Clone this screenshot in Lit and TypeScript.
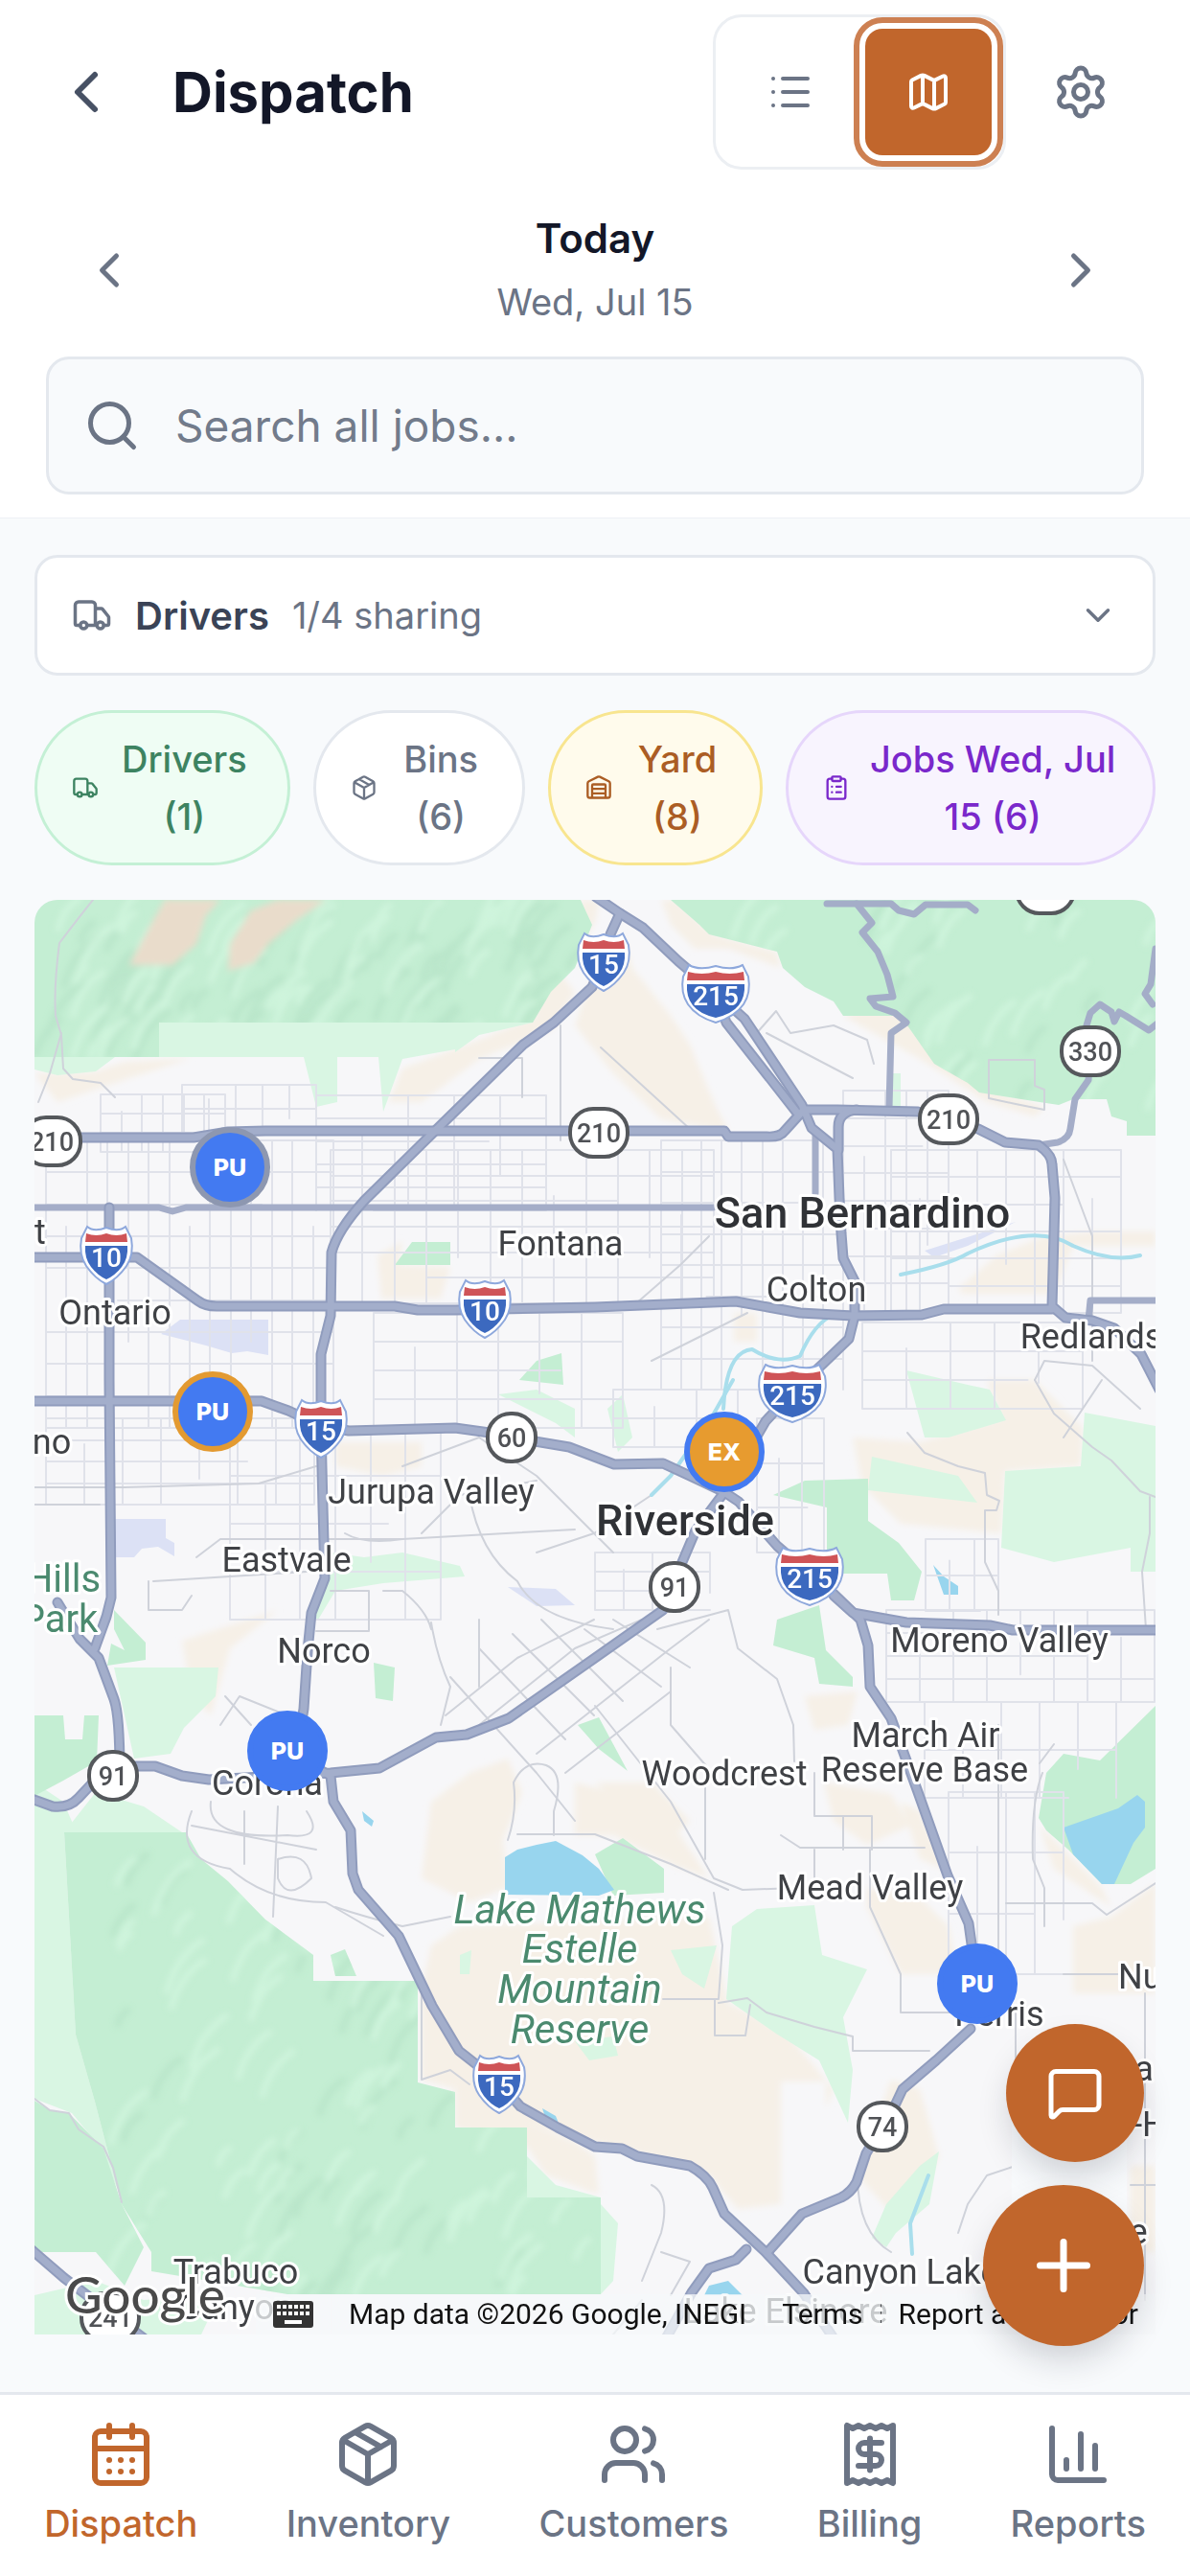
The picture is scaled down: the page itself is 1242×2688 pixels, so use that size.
import { LitElement, html, svg, css } from "lit";
import { customElement, property, state } from "lit/decorators.js";
import { classMap } from "lit/directives/class-map.js";
import { styleMap } from "lit/directives/style-map.js";

const ICONS: Record<string, unknown> = {
  left: svg`<path d="m15 18-6-6 6-6" />`,
  right: svg`<path d="m9 18 6-6-6-6" />`,
  down: svg`<path d="m6 9 6 6 6-6" />`,
  list: svg`<path d="M3 5h.01M3 12h.01M3 19h.01M8 5h13M8 12h13M8 19h13" />`,
  map: svg`<path d="M14.106 5.553a2 2 0 0 0 1.788 0l3.659-1.83A1 1 0 0 1 21 4.619v12.764a1 1 0 0 1-.553.894l-4.553 2.277a2 2 0 0 1-1.788 0l-4.212-2.106a2 2 0 0 0-1.788 0l-3.659 1.83A1 1 0 0 1 3 19.381V6.618a1 1 0 0 1 .553-.894l4.553-2.277a2 2 0 0 1 1.788 0zM15 5.764v15M9 3.236v15" />`,
  settings: svg`<path d="M9.671 4.136a2.34 2.34 0 0 1 4.659 0 2.34 2.34 0 0 0 3.319 1.915 2.34 2.34 0 0 1 2.33 4.033 2.34 2.34 0 0 0 0 3.831 2.34 2.34 0 0 1-2.33 4.033 2.34 2.34 0 0 0-3.319 1.915 2.34 2.34 0 0 1-4.659 0 2.34 2.34 0 0 0-3.32-1.915 2.34 2.34 0 0 1-2.33-4.033 2.34 2.34 0 0 0 0-3.831A2.34 2.34 0 0 1 6.35 6.051a2.34 2.34 0 0 0 3.319-1.915" /><circle cx="12" cy="12" r="3" />`,
  search: svg`<path d="m21 21-4.34-4.34" /><circle cx="11" cy="11" r="8" />`,
  truck: svg`<path d="M14 18V6a2 2 0 0 0-2-2H4a2 2 0 0 0-2 2v11a1 1 0 0 0 1 1h2M15 18H9M19 18h2a1 1 0 0 0 1-1v-3.65a1 1 0 0 0-.22-.624l-3.48-4.35A1 1 0 0 0 17.52 8H14" /><circle cx="17" cy="18" r="2" /><circle cx="7" cy="18" r="2" />`,
  package: svg`<path d="M11 21.73a2 2 0 0 0 2 0l7-4A2 2 0 0 0 21 16V8a2 2 0 0 0-1-1.73l-7-4a2 2 0 0 0-2 0l-7 4A2 2 0 0 0 3 8v8a2 2 0 0 0 1 1.73zM12 22V12M3.29 7 12 12l8.71-5M7.5 4.27l9 5.15" />`,
  warehouse: svg`<path d="M18 21V10a1 1 0 0 0-1-1H7a1 1 0 0 0-1 1v11M22 19a2 2 0 0 1-2 2H4a2 2 0 0 1-2-2V8a2 2 0 0 1 1.132-1.803l7.95-3.974a2 2 0 0 1 1.837 0l7.948 3.974A2 2 0 0 1 22 8zM6 13h12M6 17h12" />`,
  clipboard: svg`<rect x="8" y="2" width="8" height="4" rx="1" /><path d="M16 4h2a2 2 0 0 1 2 2v14a2 2 0 0 1-2 2H6a2 2 0 0 1-2-2V6a2 2 0 0 1 2-2h2M12 11h4M12 16h4M8 11h.01M8 16h.01" />`,
  calendar: svg`<path d="M8 2v4M16 2v4M3 10h18M8 14h.01M12 14h.01M16 14h.01M8 18h.01M12 18h.01M16 18h.01" /><rect x="3" y="4" width="18" height="18" rx="2" />`,
  users: svg`<path d="M16 21v-2a4 4 0 0 0-4-4H6a4 4 0 0 0-4 4v2M16 3.128a4 4 0 0 1 0 7.744M22 21v-2a4 4 0 0 0-3-3.87" /><circle cx="9" cy="7" r="4" />`,
  receipt: svg`<path d="M4 2v20l2-1 2 1 2-1 2 1 2-1 2 1 2-1 2 1V2l-2 1-2-1-2 1-2-1-2 1-2-1-2 1ZM16 8h-6a2 2 0 1 0 0 4h4a2 2 0 1 1 0 4H8M12 17.5v-11" />`,
  chart: svg`<path d="M3 3v16a2 2 0 0 0 2 2h16M18 17V9M13 17V5M8 17v-3" />`,
  message: svg`<path d="M22 17a2 2 0 0 1-2 2H6.828a2 2 0 0 0-1.414.586l-2.202 2.202A.71.71 0 0 1 2 21.286V5a2 2 0 0 1 2-2h16a2 2 0 0 1 2 2z" />`,
  plus: svg`<path d="M5 12h14M12 5v14" />`,
};

const icon = (name: string) => html`
  <svg class="icon" viewBox="0 0 24 24" aria-hidden="true">${ICONS[name]}</svg>
`;

// Map canvas origin and size, in map units
const MAP = { x: 36, y: 939, w: 1170, h: 1497 };

const HIGHWAYS = [
  // I-215
  "M622 936L647 953 671 968 708 1003 748 1037 777 1063 837 1153 847 1177 874 1199 876 1250 878 1287 880 1313 892 1337V1373L886 1397 859 1423 827 1453 799 1483 756 1557 771 1567 811 1613 846 1643 870 1663 898 1690 906 1717 908 1760 930 1793 958 1870 989 1957 1011 2007 1017 2050",
  "M752 1050L758 1067 831 1160",
  // I-15
  "M647 953L637 975 630 1003 618 1030 578 1067 546 1090 451 1183 380 1253Q352 1284 346 1307L345 1373 335 1413 335 1490 337 1573 339 1647 325 1683 321 1723 317 1783 309 1833 345 1853 348 1880 366 1910 368 1955 374 1972 416 2020 451 2093 479 2140 521 2173 543 2198 582 2220 621 2240 649 2242 665 2250 720 2260Q738 2270 744 2283L756 2310 799 2350 839 2393 870 2440",
  // 210
  "M30 1187H202L238 1181 277 1180H756L760 1186H800Q814 1187 819 1180L839 1158H874L958 1160 990 1168 1021 1178 1049 1192 1084 1195Q1098 1205 1098 1215L1101 1250 1098 1363 1112 1375 1140 1378 1163 1386 1191 1413 1210 1450",
  "M894 1158Q875 1160 875 1176V1200",
  // I-10
  "M30 1312H143L206 1357Q214 1363 226 1363H412L436 1367H475L621 1364 768 1358 835 1370 890 1373 962 1372 985 1366H1098",
  // 60
  "M30 1462H273L301 1472 335 1488 364 1493 475 1490 511 1495 534 1500 594 1510 641 1528 692 1527 720 1540 756 1557",
  "M870 1665L890 1683 946 1693 1033 1696 1057 1701H1210",
  // 91
  "M30 1876L55 1885Q72 1887 82 1876L97 1860 119 1848 143 1843H162L190 1853 218 1857 345 1850 396 1845 455 1813 487 1810 531 1793 621 1730 692 1680 712 1630 726 1597 756 1557",
  "M114 1260V1440L116 1667 111 1687 99 1720M60 1672L83 1710 103 1730 119 1773Q125 1790 125 1850",
  // 74
  "M1013 2117L977 2150 942 2180 934 2197 904 2247 894 2277Q888 2288 878 2293L837 2310 803 2348M779 2347L768 2358 740 2367 722 2392 695 2440",
  "M30 2345L67 2377 150 2440",
];

const ROUTES = [
  "M30 1260H166L180 1264 194 1260H744",
  "M863 943H894L910 963 900 973 916 993 926 1017 932 1040 908 1042 914 1050 934 1057 946 1067 930 1078 928 1156",
  "M894 943H930L938 950 954 954 966 944H1010L1018 950",
  "M1084 1195L1104 1192Q1116 1188 1117 1178L1122 1147 1136 1127 1138 1097 1134 1070 1138 1057 1148 1048 1160 1056 1163 1066 1168 1056 1175 1060 1199 1075 1208 1068",
  "M1206 990L1201 1027 1195 1037 1203 1048",
  "M851 1180V1245",
  "M1136 1377L1138 1357H1206",
];

const ROADS = [
  "M97 939Q84 955 62 984 56 1030 58 1060L64 1080 66 1115 76 1126 105 1130 120 1145M64 1078L52 1120 40 1150",
  "M36 2190L52 2202 72 2205 82 2222 108 2240 118 2262 127 2298",
  "M947 1495L965 1516 1000 1530 1028 1537 1030 1560 1043 1566 1040 1576 1028 1576V1630L1042 1660V1685",
  "M1080 1440L1100 1475 1140 1510 1160 1524 1190 1556 1206 1562M1200 1562V1600L1192 1640 1196 1700",
  "M205 1625L230 1606 420 1606 600 1596M36 1552H130L270 1548 330 1530M36 1570H104",
  "M686 1700L760 1680 770 1720 811 1752 828 1800 829 1838M700 1740V1800L740 1846M736 1846V1940",
  "M621 1780L700 1880 745 1960 775 1972 830 1970M745 1975L754 2030 750 2086H692M750 2090L780 2085 800 2100 850 2115 890 2125V2140H970M746 2086V2124H778L783 2092",
  "M815 1915L835 1928H965M880 1895V1930M850 1930V1960M908 1930V1990L940 2060V2100H1000",
  "M850 1850V1895H910V1930M1042 1800V2100M1088 1850Q1076 1880 1078 1940L1090 1970V2010M1100 1820L1085 1840M1050 1986H1140L1155 1998 1206 1965",
  "M530 1920Q540 1890 536 1860 548 1835 570 1842 590 1850 578 1890V1915M540 1914H621L700 1945 760 1972",
  "M450 1693Q456 1730 470 1760L460 1800M400 1660H420Q445 1680 450 1700M500 1690V1760",
  "M360 1600Q380 1612 420 1606M345 1660H385V1702H330M160 1650 320 1640M155 1650V1680H190L200 1665",
  "M235 1770L262 1800M230 1800L250 1770 300 1790M200 1890Q180 1940 240 1950 280 1985 340 1985L400 2020M220 1880Q215 1920 300 1915 340 1920 320 1890M255 1890V1945M290 1885 285 2000M200 1905 330 1930",
  "M290 1940Q320 1930 325 1960 300 1985 290 1960ZM350 1990Q380 2000 420 2010L470 2000M440 2060V2170L470 2160 490 2175",
  "M1060 2100V2260L1030 2270 1010 2300 1000 2330M1110 2060H1170M1195 2080V2400M1180 2280H1206",
  "M895 2270Q895 2330 930 2350M680 2280Q700 2290 690 2330L670 2380M690 2350 720 2360 700 2395M670 2400 640 2436",
  "M627 1093L720 1178M585 1070V1190M500 1104H545V1145M788 1080L810 1055 825 1078 870 1070 905 1085 912 1110M800 1078 890 1125",
  "M1032 1106H1080V1133L1090 1137V1158L1060 1152 1032 1146ZM1110 1210 1125 1250 1140 1290V1420",
  "M664 1360 710 1320 740 1290M680 1420 780 1370M1080 1440 1090 1420 1140 1425 1190 1470M1150 1440 1110 1500",
  // Arlington diagonals
  "M470 1750L560 1850 600 1900M500 1720L590 1815M535 1705L620 1790M565 1690L650 1775M610 1700L690 1760M640 1690L720 1740",
  "M465 1790L540 1730 620 1690M500 1800L600 1720 670 1690M560 1830L700 1720 740 1690M590 1850L700 1765",
  "M420 1530L500 1500 560 1540 640 1620M440 1600L480 1560 560 1545M490 1560Q500 1620 540 1650 560 1690 640 1700M560 1620 620 1600 680 1560",
];

// x, y, width, height, columns, rows
const GRIDS = [
  [105, 1142, 130, 60, 6, 3],
  [190, 1132, 140, 50, 5, 2],
  [330, 1143, 240, 120, 5, 5],
  [48, 1190, 300, 300, 14, 9],
  [345, 1200, 400, 160, 12, 6],
  [390, 1370, 260, 120, 6, 4],
  [48, 1480, 280, 90, 7, 4],
  [240, 1490, 220, 200, 6, 4],
  [690, 1190, 190, 260, 9, 8],
  [640, 1450, 130, 60, 3, 2],
  [880, 1138, 110, 230, 5, 8],
  [930, 1200, 240, 170, 8, 6],
  [900, 1380, 230, 90, 5, 3],
  [925, 1680, 280, 96, 8, 4],
  [965, 1776, 200, 100, 5, 2],
  [990, 1870, 120, 190, 4, 3],
  [621, 1620, 120, 60, 4, 3],
  [790, 1480, 70, 140, 3, 3],
  [966, 1606, 76, 75, 3, 2],
];

const WOODS = [
  "M36 939H606L618 965 600 1010 575 1035 556 1067H166V1103H36Z",
  "M700 939L730 965 740 975 811 993 817 1010 840 1030 870 1045 880 1060 940 1060 975 1110 1010 1130 1022 1140 1085 1150 1105 1153 1120 1147H1155L1160 1165 1176 1170V1185H1206V939Z",
  "M67 1912H194L210 1940 238 1963 277 2003 327 2040V2067H436V2173L475 2183V2220H550V2293H627V2394L300 2394 158 2370 158 2350 127 2300 99 2193 79 2123Z",
  "M36 2192L52 2202 72 2205 108 2242 127 2300 150 2345 130 2385 100 2350H36Z",
  "M36 1790H66L68 1815H86L88 1790H103L101 1838 66 1858 36 1874Z",
  "M119 1680L152 1714V1732L112 1738 116 1715 130 1722 119 1700Z",
  "M807 1560L840 1545 906 1543V1587L938 1610 962 1640 954 1670H930L926 1642H863V1573Z",
  "M811 1690L855 1675 862 1722 890 1750V1760L855 1757 850 1730 807 1717Z",
  "M1206 1780L1148 1837 1110 1830 1092 1850 1084 1897 1092 1910 1115 1930 1150 1966 1180 1966 1206 1950Z",
  "M621 1935L650 1918 693 1950V1975L640 1978Z",
  "M603 1800L625 1792 640 1820 655 1848 625 1825Z",
  "M412 1320L430 1296H470V1320Z",
  "M542 1440L560 1420 586 1412 588 1445Z",
  "M390 1735L412 1740 410 1775 392 1772Z",
  "M345 2040L360 2034 372 2062H350Z",
];

const MEADOWS = [
  "M166 1067H475V1095L420 1105 400 1160 395 1103H352V1150L330 1155 317 1103H166Z",
  "M475 1067H556L500 1080 475 1098ZM36 1103H120L100 1118 60 1122 36 1116Z",
  "M36 1860L66 1880 80 1912H67L79 2123 99 2193 127 2300 158 2350 130 2300 100 2235 75 2205 36 2190Z",
  "M100 1870L150 1885 190 1912H67Z",
  "M119 1740H228L225 1770 192 1803 178 1830 140 1835Z",
  "M320 1690L345 1620 380 1625 420 1620 480 1634 485 1645 400 1652 350 1660 332 1690Z",
  "M520 1455L560 1450 600 1470 600 1500 580 1485Z",
  "M946 1430L1010 1445 1033 1450 1050 1482 990 1500 965 1500Z",
  "M1049 1535L1128 1530 1132 1474 1206 1488V1640H1180V1615L1100 1630 1045 1615Z",
  "M910 1520L1000 1540 1020 1568 950 1560 906 1555Z",
  "M764 2010L790 1992 850 1988 858 2040 905 2055 880 2105 890 2160 885 2215 855 2150 810 2122 758 2086Z",
  "M960 2260L980 2245 970 2300 935 2330 925 2345 910 2335 925 2300Z",
  "M700 2035L748 2030 735 2075 712 2060Z",
  "M550 2250L580 2280 627 2293H550ZM627 2300L645 2320 640 2380 627 2394Z",
  "M36 2395L100 2380 150 2400 230 2394 210 2436H36Z",
  "M634 1470L650 1455 660 1500 645 1515Z",
  "M930 1120H940V1155H930Z",
  "M600 2130L640 2125 645 2145 615 2150Z",
  "M480 2040L492 2035 490 2060H480Z",
];

const SANDS = [
  "M625 1000L650 975 660 1010 700 1060 720 1090 745 1150 760 1180 690 1168 640 1120 600 1070Z",
  "M606 939H625L622 960 600 1000ZM545 985L560 985 600 1035 575 1075 500 1105 440 1150 405 1150 420 1115 500 1085 560 1060Z",
  "M690 939H705L745 975 811 993 815 1010 760 990 725 990 700 965Z",
  "M880 1060L935 1045 960 1025 985 1025 985 1060 1000 1110 1030 1135 1090 1155 1080 1165 1030 1150 960 1105Z",
  "M1000 1345L1040 1310 1090 1290 1140 1285 1206 1285V1300L1120 1300 1100 1350H1005ZM766 1370H790V1400H766Z",
  "M394 1310L420 1295 416 1320 470 1322 460 1355H398ZM350 1505H440V1530L400 1540 350 1530Z",
  "M450 1880L490 1850 530 1835 545 1870 525 1920 530 1970 490 1985 440 1960Z",
  "M440 2075L450 2030 480 2010 740 2000 760 2090 820 2120 870 2180 862 2200V2172H815V2300L770 2305 740 2270 700 2255 600 2230 550 2215 475 2215V2180L440 2170Z",
  "M600 1860L640 1870 700 1900 740 1960 700 1945 640 1915 600 1915Z",
  "M621 1860L680 1860 720 1900 700 1920ZM940 1880 960 1890 985 1950 960 1940Z",
  "M860 1860L930 1872 950 1905 905 1925 870 1900ZM905 1970 960 1980 990 2010 1000 2060 940 2060 905 1990Z",
  "M1030 1440H1080L1130 1490 1128 1530 1049 1535 1045 1600 940 1590 900 1550 890 1500 960 1505 1045 1480Z",
  "M840 1770L895 1765 885 1800 850 1805Z",
  "M1120 2010L1160 2000 1206 1965V2080H1120ZM1085 1905 1115 1935 1150 1970 1160 1990 1100 1950ZM1180 2260H1206V2350H1180Z",
  "M895 2270L930 2170 960 2180 980 2250 940 2320Z",
  "M475 2215H550L600 2235 621 2250 625 2290 570 2270 550 2240 475 2220Z",
  "M190 1712L290 1680 240 1720 220 1790 200 1770Z",
  "M36 1120L100 1118 130 1108 200 1104 120 1130 60 1150Z",
];

const TANS = [
  "M135 1007L160 960 172 939H230L215 955 205 985 180 1007Z",
  "M238 1013L240 985 262 950 290 939H340L310 960 280 985 265 1005Z",
];

const WATER = [
  "M527 1977V1938L540 1930 560 1925 580 1921 608 1936 625 1950 641 1972 625 1978Z",
  "M1110 1907L1167 1887 1187 1873 1195 1880 1195 1907 1183 1923 1163 1966H1150L1120 1935Z",
  "M974 1633L985 1645 1000 1655V1664H985ZM740 2385L760 2380 775 2395H735Z",
  "M566 2200L580 2208 584 2218 570 2212ZM378 1890L390 1900 388 1906 380 1900Z",
];

const CIVIC = [
  "M168 1392L188 1377H280V1414L258 1410 242 1412 215 1404Z",
  "M120 1585H173V1605L182 1610V1624L165 1614 148 1616 140 1625H120Z",
  "M530 1656L580 1658 600 1675 560 1676Z",
  "M965 1305L1060 1275 1010 1300 975 1312Z",
];

const RIVERS = [
  "M755 1470Q758 1410 785 1408 812 1425 835 1415 850 1380 870 1372M940 1330Q990 1320 1010 1308 1080 1275 1120 1300 1160 1318 1190 1310",
  "M765 1440 745 1475 700 1540 680 1560M969 2270 950 2320 952 2352",
];

const TOWNS = [
  { t: "San Bernardino", x: 900, y: 1281, cls: "city" },
  { t: "Riverside", x: 715, y: 1602, cls: "city" },
  { t: "Fontana", x: 585, y: 1310 },
  { t: "Colton", x: 852, y: 1358 },
  { t: "Redlands", x: 1139, y: 1407 },
  { t: "Ontario", x: 120, y: 1382 },
  { t: "t", x: 42, y: 1298 },
  { t: "no", x: 54, y: 1517 },
  { t: "Jurupa Valley", x: 450, y: 1569 },
  { t: "Eastvale", x: 299, y: 1640 },
  { t: "Norco", x: 338, y: 1735 },
  { t: "Corona", x: 279, y: 1873 },
  { t: "Moreno Valley", x: 1043, y: 1724 },
  { t: "March Air", x: 966, y: 1823 },
  { t: "Reserve Base", x: 965, y: 1859 },
  { t: "Woodcrest", x: 756, y: 1863 },
  { t: "Mead Valley", x: 908, y: 1982 },
  { t: "Perris", x: 1043, y: 2114 },
  { t: "Nuevo", x: 1218, y: 2075 },
  { t: "a", x: 1194, y: 2171 },
  { t: "-H", x: 1200, y: 2229 },
  { t: "e", x: 1188, y: 2341 },
  { t: "Canyon Lake", x: 940, y: 2383 },
  { t: "Lake Elsinore", x: 820, y: 2424 },
  { t: "Trabuco", x: 246, y: 2383 },
  { t: "Canyon", x: 246, y: 2420 },
  { t: "Hills", x: 66, y: 1661, cls: "park" },
  { t: "Park", x: 62, y: 1703, cls: "park" },
  { t: "Lake Mathews", x: 605, y: 2007, cls: "park slant" },
  { t: "Estelle", x: 605, y: 2048, cls: "park slant" },
  { t: "Mountain", x: 605, y: 2090, cls: "park slant" },
  { t: "Reserve", x: 605, y: 2132, cls: "park slant" },
];

const SHIELDS = [
  { t: "15", x: 630, y: 1003 },
  { t: "215", x: 747, y: 1036 },
  { t: "10", x: 111, y: 1309 },
  { t: "10", x: 506, y: 1365 },
  { t: "215", x: 827, y: 1453 },
  { t: "15", x: 335, y: 1490 },
  { t: "215", x: 845, y: 1644 },
  { t: "15", x: 521, y: 2174 },
];

const BADGES = [
  { t: "210", x: 54, y: 1191 },
  { t: "210", x: 625, y: 1182 },
  { t: "210", x: 990, y: 1168 },
  { t: "330", x: 1138, y: 1097 },
  { t: "", x: 1091, y: 928 },
  { t: "60", x: 534, y: 1500 },
  { t: "91", x: 118, y: 1853 },
  { t: "91", x: 704, y: 1656 },
  { t: "74", x: 921, y: 2219 },
  { t: "241", x: 115, y: 2418 },
];

const MARKERS = [
  { t: "PU", x: 240, y: 1218, cls: "late" },
  { t: "PU", x: 222, y: 1473, cls: "soon" },
  { t: "EX", x: 756, y: 1515, cls: "exchange" },
  { t: "PU", x: 300, y: 1827, cls: "" },
  { t: "PU", x: 1020, y: 2070, cls: "" },
];

const gridPath = ([x, y, w, h, cols, rows]: number[]) => {
  let d = "";
  for (let i = 0; i <= cols; i++) {
    const cx = Math.round(x + (w * i) / cols);
    // every third street stops short so the blocks look uneven
    const cut = i % 3 === 1 ? h * 0.3 : 0;
    d += `M${cx} ${y + (i % 2 ? cut : 0)}V${y + h - (i % 2 ? 0 : cut)}`;
  }
  for (let j = 0; j <= rows; j++) {
    const cy = Math.round(y + (h * j) / rows);
    const cut = j % 3 === 2 ? w * 0.25 : 0;
    d += `M${x + (j % 2 ? cut : 0)} ${cy}H${x + w - (j % 2 ? 0 : cut)}`;
  }
  return d;
};

// Short diagonal ridges, used as hill relief inside the woods
const ridges = (x: number, y: number, w: number, h: number, n: number, seed: number) => {
  let s = seed;
  const rnd = () => (s = (s * 16807) % 2147483647) / 2147483647;
  let d = "";
  for (let i = 0; i < n; i++) {
    const l = 14 + Math.round(rnd() * 40);
    d += `M${Math.round(x + rnd() * w)} ${Math.round(y + rnd() * h)}q${Math.round(l * 0.2)} ${-Math.round(l * 0.7)} ${Math.round(l * 0.7)} ${-l}`;
  }
  return d;
};

@customElement("dispatch-map")
export class DispatchMap extends LitElement {
  static styles = css`
    :host {
      position: relative;
      display: block;
      overflow: hidden;
      border-radius: 24px 24px 0 0;
      background: #f7f7f9;
      font-family: Roboto, "Liberation Sans", sans-serif;
    }
    .canvas {
      position: absolute;
      inset: 0;
      width: 100%;
      height: 100%;
    }
    .line {
      fill: none;
      stroke-linecap: round;
      stroke-linejoin: round;
    }
    .grid {
      stroke: #e0e2ea;
      stroke-width: 2;
    }
    .road {
      stroke: #cfd2da;
      stroke-width: 2;
    }
    .route {
      stroke: #a4adc8;
      stroke-width: 7;
    }
    .casing {
      stroke: #909cbd;
      stroke-width: 11;
    }
    .highway {
      stroke: #a3aecb;
      stroke-width: 7;
    }
    .river {
      stroke: #a9deec;
      stroke-width: 4;
    }
    .wood {
      fill: #c4eed3;
    }
    .meadow {
      fill: #d9f6e3;
    }
    .sand {
      fill: #f6f0e7;
    }
    .tan {
      fill: #e9dccb;
    }
    .water {
      fill: #98d5ee;
    }
    .civic {
      fill: #dce1f5;
    }
    .shade {
      stroke: #addcbe;
      stroke-width: 7;
      opacity: 0.4;
    }
    .glow {
      stroke: #d3f7df;
      stroke-width: 7;
      opacity: 0.7;
    }
    text {
      text-anchor: middle;
      font-size: 36px;
      fill: #3f4145;
      stroke: #fff;
      stroke-width: 6;
      stroke-linejoin: round;
      paint-order: stroke;
    }
    .city {
      font-size: 45px;
      font-weight: 500;
      fill: #303236;
    }
    .park {
      font-size: 40px;
      fill: #4b8a6f;
    }
    .slant {
      font-size: 42px;
      font-style: italic;
    }
    .shield-edge {
      fill: #fff;
      stroke: #8ea8dc;
      stroke-width: 2;
    }
    .shield-top {
      fill: #cf5457;
    }
    .shield-body {
      fill: #3c69bf;
    }
    .shield-no {
      font-size: 28px;
      font-weight: 500;
      fill: #fff;
      stroke: none;
    }
    .badge {
      fill: #fff;
      stroke: #55585c;
      stroke-width: 4;
    }
    .badge-no {
      font-size: 27px;
      font-weight: 500;
      fill: #505256;
      stroke: none;
    }
    .marker {
      position: absolute;
      box-sizing: border-box;
      width: 84px;
      height: 84px;
      margin: -42px 0 0 -42px;
      padding: 0;
      border: 6px solid #437af1;
      border-radius: 50%;
      background: #437af1;
      color: #fff;
      font: 800 25px Inter, "Liberation Sans", sans-serif;
    }
    .late {
      border-color: #8d97b0;
    }
    .soon {
      border-color: #e39a31;
    }
    .exchange {
      background: #e79b2f;
    }
    .logo {
      position: absolute;
      left: 32px;
      bottom: 12px;
      color: #4a4a4a;
      font: 500 53px/60px Lato, "Liberation Sans", sans-serif;
      text-decoration: none;
      -webkit-text-stroke: 6px #fff;
      paint-order: stroke fill;
    }
    .credits {
      position: absolute;
      right: 0;
      bottom: 0;
      display: flex;
      align-items: stretch;
      gap: 1px;
      height: 42px;
      font-size: 30px;
      line-height: 42px;
      white-space: nowrap;
    }
    .credits > * {
      padding: 0 18px;
      border: 0;
      background: rgba(246, 248, 249, 0.75);
      color: #111;
      font-family: inherit;
      text-decoration: none;
    }
    .keys {
      display: flex;
      align-items: center;
    }
    .keys svg {
      width: 42px;
      height: 28px;
    }
  `;

  private shield(s: { t: string; x: number; y: number }) {
    const w = s.t.length > 2 ? 34 : 26;
    const i = w - 5;
    return svg`
      <g transform="translate(${s.x} ${s.y})">
        <path class="shield-edge" d="M${-w + 6} -29Q${-w / 2} -23 0 -28Q${w / 2} -23 ${w - 6} -29L${w} -17Q${w + 3} 0 ${w - 5} 12Q${w - 14} 25 0 31Q${-w + 14} 25 ${-w + 5} 12Q${-w - 3} 0 ${-w} -17Z" />
        <path class="shield-top" d="M${-i} -22Q${-i / 2} -18 0 -22Q${i / 2} -18 ${i} -22L${i + 1} -13H${-i - 1}Z" />
        <path class="shield-body" d="M${-i - 1} -9H${i + 1}Q${i + 2} 4 ${i - 5} 13Q${i - 12} 22 0 26Q${-i + 12} 22 ${-i + 5} 13Q${-i - 2} 4 ${-i - 1} -9Z" />
        <text class="shield-no" y="13">${s.t}</text>
      </g>
    `;
  }

  private badge(b: { t: string; x: number; y: number }) {
    const w = b.t.length === 2 ? 50 : 60;
    return svg`
      <rect class="badge" x=${b.x - w / 2} y=${b.y - 25} width=${w} height="50" rx="24" />
      <text class="badge-no" x=${b.x} y=${b.y + 10}>${b.t}</text>
    `;
  }

  render() {
    const each = (paths: string[], cls: string) =>
      paths.map((d) => svg`<path class=${cls} d=${d} />`);
    return html`
      <svg
        class="canvas"
        viewBox="${MAP.x} ${MAP.y} ${MAP.w} ${MAP.h}"
        preserveAspectRatio="xMidYMid slice"
      >
        <defs>
          <clipPath id="woods">${each(WOODS, "")}</clipPath>
          <filter id="soft" x="-5%" y="-5%" width="110%" height="110%">
            <feGaussianBlur stdDeviation="3" />
          </filter>
        </defs>
        <g filter="url(#soft)">${each(SANDS, "sand")}</g>
        ${each(MEADOWS, "meadow")} ${each(WOODS, "wood")}
        <g clip-path="url(#woods)">
          <g filter="url(#soft)">
            <path class="line shade" d=${ridges(36, 980, 560, 130, 80, 7)} />
            <path class="line glow" d=${ridges(36, 960, 560, 150, 60, 31)} />
            <path class="line shade" d=${ridges(720, 960, 480, 230, 14, 11)} />
            <path class="line glow" d=${ridges(720, 960, 480, 230, 40, 17)} />
            <path class="line shade" d=${ridges(110, 1930, 500, 480, 50, 23)} />
            <path class="line glow" d=${ridges(110, 1950, 500, 450, 100, 41)} />
            ${each(TANS, "tan")}
          </g>
        </g>
        ${each(CIVIC, "civic")} ${each(WATER, "water")}
        ${GRIDS.map((g) => svg`<path class="line grid" d=${gridPath(g)} />`)}
        ${each(ROADS, "line road")} ${each(RIVERS, "line river")}
        ${each(ROUTES, "line route")} ${each(HIGHWAYS, "line casing")}
        ${each(HIGHWAYS, "line highway")}
        ${TOWNS.map(
          (t) => svg`<text class=${t.cls ?? ""} x=${t.x} y=${t.y}>${t.t}</text>`
        )}
        ${BADGES.map((b) => this.badge(b))}
        ${SHIELDS.map((s) => this.shield(s))}
      </svg>
      ${MARKERS.map(
        (m) => html`
          <button
            class="marker ${m.cls}"
            style=${styleMap({
              left: `${((m.x - MAP.x) / MAP.w) * 100}%`,
              top: `${((m.y - MAP.y) / MAP.h) * 100}%`,
            })}
          >
            ${m.t}
          </button>
        `
      )}
      <a class="logo" href="#google">Google</a>
      <div class="credits">
        <button class="keys" aria-label="Keyboard shortcuts">
          <svg viewBox="0 0 42 28">
            <rect width="42" height="28" rx="3" fill="#333" />
            <path
              d="M4 6H38M4 13H38"
              stroke="#fff"
              stroke-width="4"
              stroke-dasharray="4 2"
            />
            <path d="M12 22H30" stroke="#fff" stroke-width="4" />
          </svg>
        </button>
        <span>Map data ©2026 Google, INEGI</span>
        <a href="#terms">Terms</a>
        <a href="#report">Report a map error</a>
      </div>
    `;
  }
}

@customElement("app-root")
export class AppRoot extends LitElement {
  static styles = css`
    :host {
      --accent: #c1662c;
      --line: #e4e8ee;
      --muted: #6b7485;
      display: flex;
      flex-direction: column;
      min-height: 100vh;
      background: #f8fafc;
      color: #131728;
      font-family: Inter, "Liberation Sans", sans-serif;
    }
    * {
      box-sizing: border-box;
    }
    button {
      display: flex;
      align-items: center;
      justify-content: center;
      padding: 0;
      border: 0;
      background: none;
      color: var(--muted);
      font: inherit;
      cursor: pointer;
    }
    .icon {
      flex: none;
      width: 60px;
      height: 60px;
      fill: none;
      stroke: currentColor;
      stroke-width: 2;
      stroke-linecap: round;
      stroke-linejoin: round;
    }
    header {
      padding: 15px 48px 24px;
      border-bottom: 1px solid #eef1f5;
      background: #fff;
    }
    .bar {
      display: flex;
      align-items: center;
      gap: 12px;
    }
    .tap {
      width: 132px;
      height: 132px;
    }
    .back {
      margin-left: -24px;
      color: #475164;
    }
    .back .icon {
      width: 72px;
      height: 72px;
    }
    h1 {
      flex: 1;
      margin: 0 0 0 12px;
      font-size: 58px;
      font-weight: 700;
      line-height: 72px;
    }
    .toggle {
      display: flex;
      gap: 12px;
      padding: 12px;
      border: 3px solid #eceff3;
      border-radius: 30px;
    }
    .toggle .icon {
      width: 48px;
      height: 48px;
    }
    .toggle .on {
      border-radius: 18px;
      outline: 6px solid #cd8052;
      outline-offset: 6px;
      background: var(--accent);
      box-shadow: 0 0 0 6px #fff;
      color: #fff;
    }
    .day {
      display: flex;
      align-items: center;
      justify-content: space-between;
      margin: 39px 0 24px;
      text-align: center;
    }
    .day strong,
    .day span {
      display: block;
      font-size: 42px;
      font-weight: 600;
      line-height: 66px;
    }
    .day span {
      color: var(--muted);
      font-size: 38px;
      font-weight: 400;
    }
    .search {
      display: flex;
      align-items: center;
      gap: 36px;
      height: 144px;
      padding: 0 36px;
      border: 3px solid var(--line);
      border-radius: 24px;
      background: #f8fafc;
      color: var(--muted);
    }
    .search input {
      flex: 1;
      min-width: 0;
      padding: 0;
      border: 0;
      outline: 0;
      background: none;
      color: #131728;
      font: 400 46px/60px Inter, "Liberation Sans", sans-serif;
    }
    .search input::placeholder {
      color: #727b8b;
      opacity: 1;
    }
    main {
      position: relative;
      display: flex;
      flex: 1;
      flex-direction: column;
      gap: 36px;
      padding: 38px 36px 60px;
    }
    .drivers {
      gap: 24px;
      height: 126px;
      padding: 0 36px;
      border: 3px solid var(--line);
      border-radius: 24px;
      background: #fff;
      font-size: 40px;
    }
    .drivers .icon {
      width: 42px;
      height: 42px;
    }
    .drivers strong {
      color: #3a4356;
      font-weight: 600;
    }
    .drivers .count {
      flex: 1;
      font-size: 38px;
      text-align: left;
    }
    .layers {
      display: grid;
      grid-template-columns: 267fr 221fr 225fr 386fr;
      gap: 24px;
    }
    .layer {
      gap: 18px;
      padding: 18px 36px;
      border: 3px solid var(--line);
      border-radius: 81px;
      background: #fff;
      font-size: 38px;
      font-weight: 500;
      line-height: 60px;
    }
    .layer .icon {
      width: 28px;
      height: 28px;
    }
    .layer span {
      flex: 1;
    }
    .green {
      border-color: #c4f0d5;
      background: #effdf4;
      color: #3d8361;
    }
    .amber {
      border-color: #f8e58f;
      background: #fffbec;
      color: #ab5d24;
    }
    .violet {
      border-color: #e6d6fb;
      background: #f8f4fe;
      color: #7a28cb;
    }
    dispatch-map {
      flex: 1;
      min-height: 900px;
    }
    .actions {
      position: absolute;
      right: 48px;
      bottom: 48px;
      isolation: isolate;
      display: flex;
      flex-direction: column;
      align-items: flex-end;
      gap: 24px;
    }
    .actions::before {
      content: "";
      position: absolute;
      z-index: -1;
      top: 72px;
      right: 18px;
      width: 120px;
      height: 180px;
      background: #f8fafc;
    }
    .fab {
      width: 168px;
      height: 168px;
      border-radius: 50%;
      background: var(--accent);
      box-shadow: 0 18px 36px -6px rgba(20, 24, 40, 0.2);
      color: #fff;
    }
    .fab .icon {
      width: 84px;
      height: 84px;
    }
    .small {
      width: 144px;
      height: 144px;
    }
    .small .icon {
      width: 60px;
      height: 60px;
    }
    nav {
      display: flex;
      justify-content: space-around;
      min-height: 192px;
      padding-top: 26px;
      border-top: 3px solid var(--line);
      background: #fff;
    }
    nav a {
      display: flex;
      flex-direction: column;
      align-items: center;
      gap: 9px;
      color: var(--muted);
      font-size: 38px;
      font-weight: 500;
      line-height: 54px;
      text-decoration: none;
    }
    nav .icon {
      width: 72px;
      height: 72px;
    }
    nav .current {
      color: var(--accent);
    }
  `;

  @property() page = "Dispatch";
  @state() private view = "map";

  private tabs = [
    ["Dispatch", "calendar"],
    ["Inventory", "package"],
    ["Customers", "users"],
    ["Billing", "receipt"],
    ["Reports", "chart"],
  ];

  private layers = [
    { label: "Drivers (1)", icon: "truck", tone: "green" },
    { label: "Bins (6)", icon: "package", tone: "" },
    { label: "Yard (8)", icon: "warehouse", tone: "amber" },
    { label: "Jobs Wed, Jul 15 (6)", icon: "clipboard", tone: "violet" },
  ];

  render() {
    return html`
      <header>
        <div class="bar">
          <button class="tap back" aria-label="Back">${icon("left")}</button>
          <h1>${this.page}</h1>
          <div class="toggle">
            ${["list", "map"].map(
              (v) => html`
                <button
                  class=${classMap({ tap: true, on: this.view === v })}
                  aria-label="${v} view"
                  @click=${() => (this.view = v)}
                >
                  ${icon(v)}
                </button>
              `
            )}
          </div>
          <button class="tap" aria-label="Settings">${icon("settings")}</button>
        </div>
        <div class="day">
          <button class="tap" aria-label="Previous day">${icon("left")}</button>
          <div><strong>Today</strong><span>Wed, Jul 15</span></div>
          <button class="tap" aria-label="Next day">${icon("right")}</button>
        </div>
        <label class="search">
          ${icon("search")}
          <input
            type="text"
            aria-label="Search all jobs"
            placeholder="Search all jobs..."
          />
        </label>
      </header>
      <main>
        <button class="drivers" aria-expanded="false">
          ${icon("truck")}<strong>Drivers</strong>
          <span class="count">1/4 sharing</span>${icon("down")}
        </button>
        <div class="layers">
          ${this.layers.map(
            (l) => html`
              <button class="layer ${l.tone}">
                ${icon(l.icon)}<span>${l.label}</span>
              </button>
            `
          )}
        </div>
        <dispatch-map></dispatch-map>
        <div class="actions">
          <button class="fab small" aria-label="Messages">
            ${icon("message")}
          </button>
          <button class="fab" aria-label="New job">${icon("plus")}</button>
        </div>
      </main>
      <nav>
        ${this.tabs.map(
          ([label, name]) => html`
            <a
              href="#${label.toLowerCase()}"
              class=${classMap({ current: label === this.page })}
              >${icon(name)}<span>${label}</span></a
            >
          `
        )}
      </nav>
    `;
  }
}
